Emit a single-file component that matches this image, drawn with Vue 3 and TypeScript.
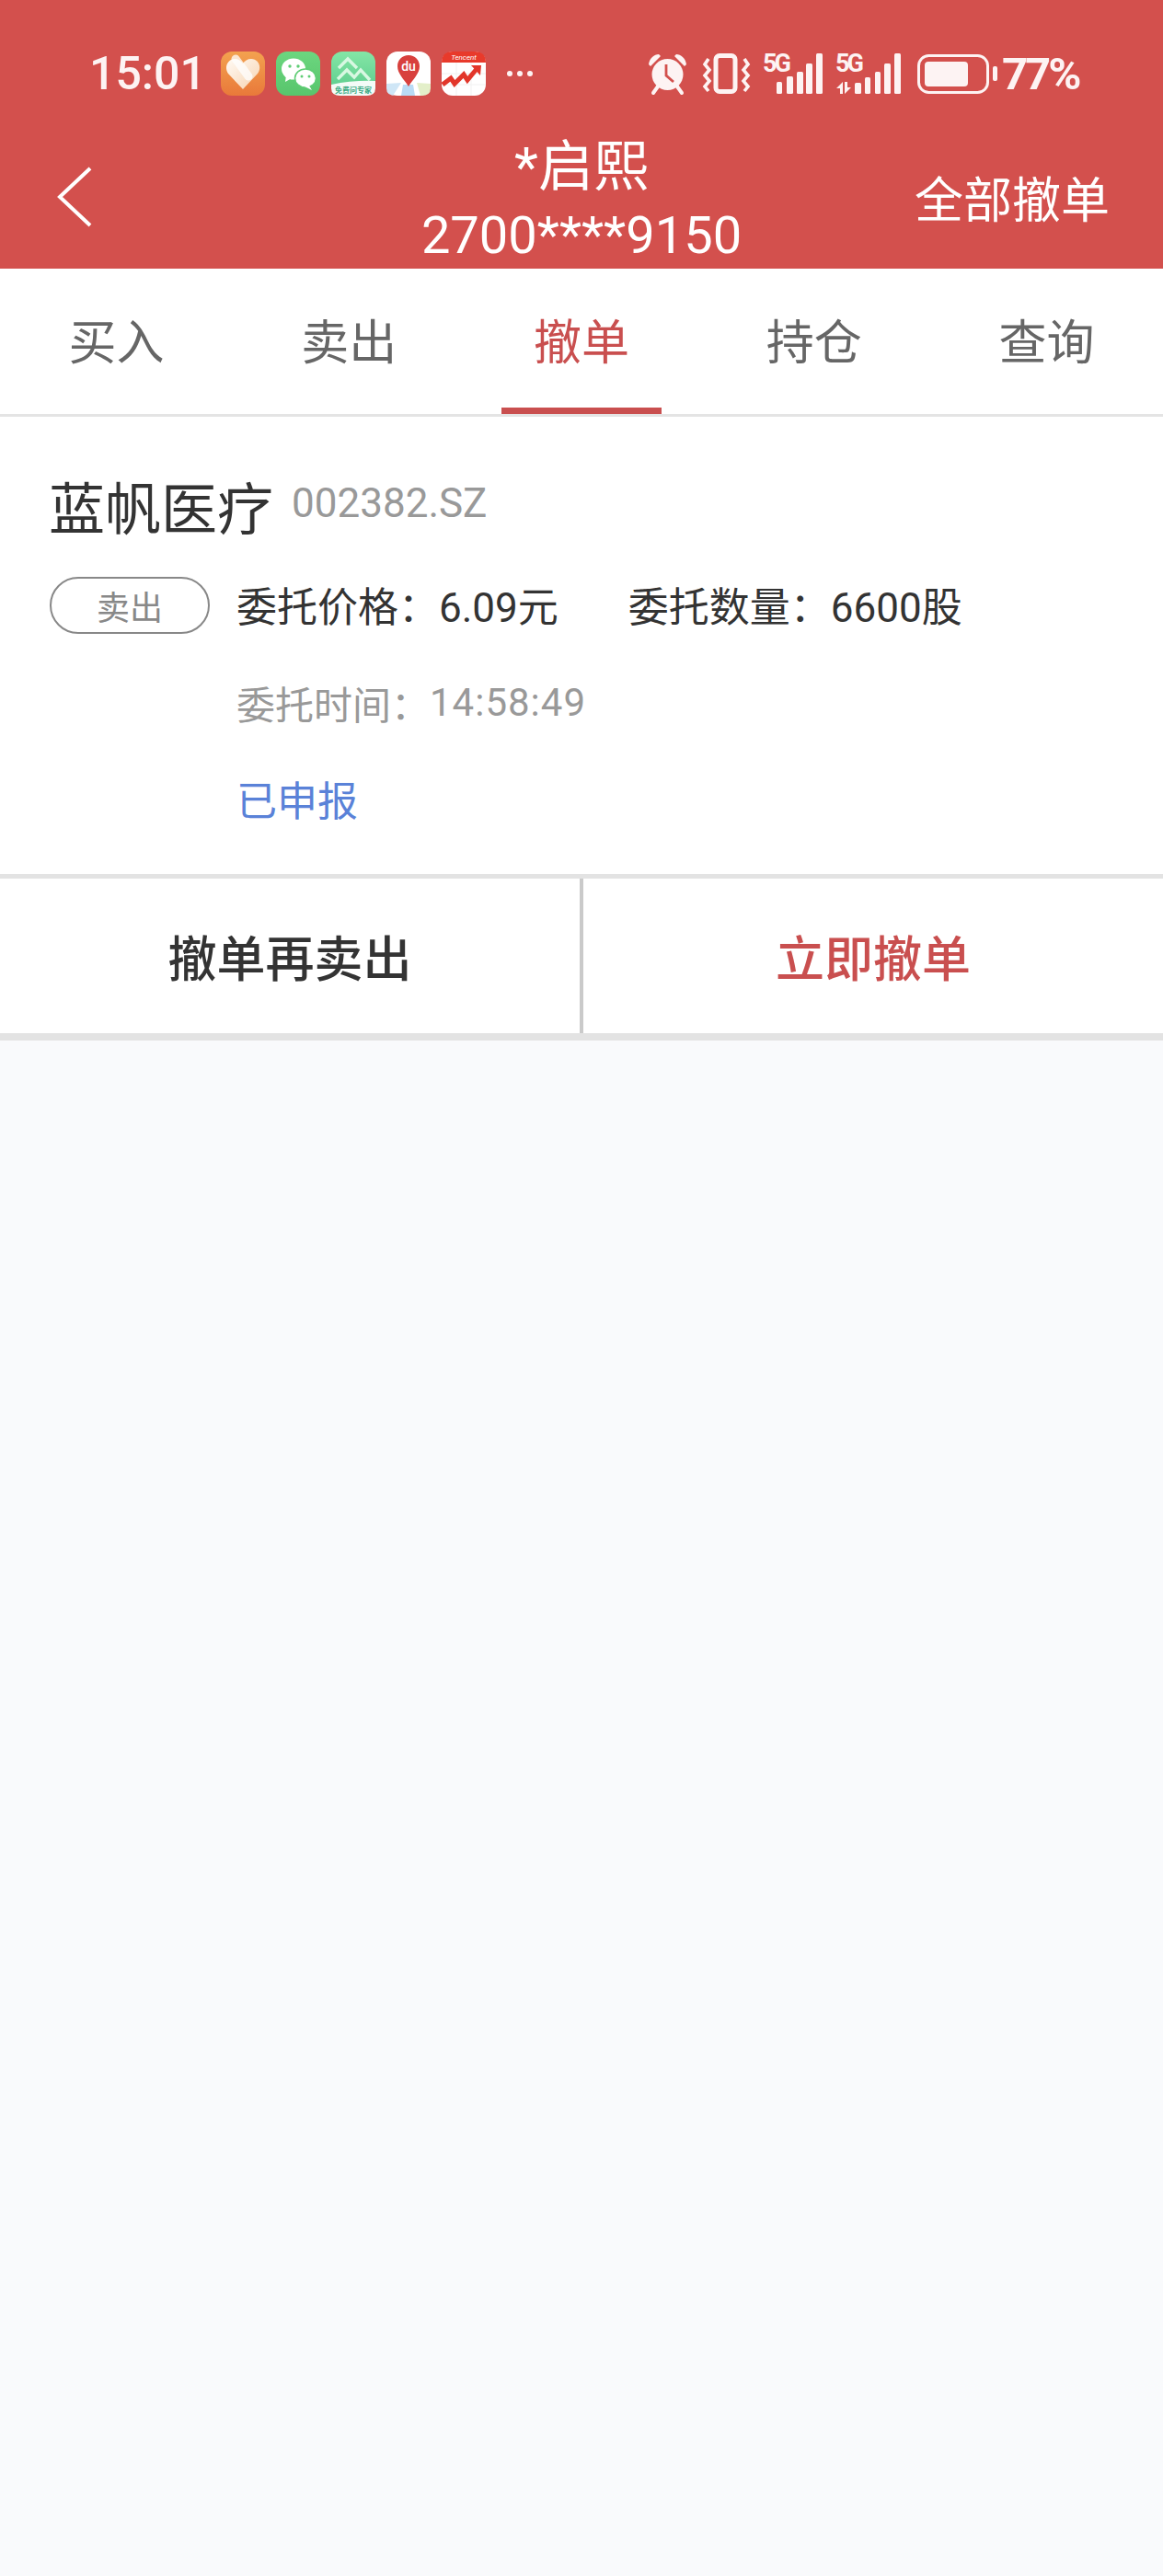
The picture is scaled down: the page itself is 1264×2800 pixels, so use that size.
<template>
  <div class="page">
    <header class="header">
      <div class="status">
        <span class="time">15:01</span>
        <div class="apps">
          <svg class="app" viewBox="0 0 48 48">
            <defs>
              <linearGradient id="orange" x1="0" y1="0" x2="0" y2="1"><stop offset="0" stop-color="#f3a24f" /><stop offset="1" stop-color="#e9793a" /></linearGradient>
              <linearGradient id="heart" x1="0" y1="0" x2="1" y2="1"><stop offset="0" stop-color="#fffaf4" /><stop offset="1" stop-color="#f7d3b0" /></linearGradient>
              <linearGradient id="wx" x1="0" y1="0" x2="0" y2="1"><stop offset="0" stop-color="#6cd67f" /><stop offset="1" stop-color="#58c56c" /></linearGradient>
              <linearGradient id="mint" x1="0" y1="0" x2="0" y2="1"><stop offset="0" stop-color="#84e6a6" /><stop offset="1" stop-color="#58c98a" /></linearGradient>
            </defs>
            <rect width="48" height="48" rx="12" fill="url(#orange)" />
            <path d="M24 41 L8 24 C3 17 8 8 15 8 C19 8 22 10 24 13 C26 10 29 8 33 8 C41 8 45 17 40 24 Z" fill="url(#heart)" />
            <path d="M16 8 L30 27" stroke="#fff" stroke-width="9" stroke-linecap="round" opacity=".75" />
          </svg>
          <svg class="app" viewBox="0 0 48 48">
            <rect width="48" height="48" rx="12" fill="url(#wx)" />
            <ellipse cx="19" cy="19" rx="13" ry="11.5" fill="#fff" />
            <path d="M11 26 L10 33 L17 29 Z" fill="#fff" />
            <ellipse cx="32" cy="29" rx="11.5" ry="10" fill="#fff" stroke="#5fcd75" stroke-width="1.5" />
            <path d="M36 37 L39 42 L31 38 Z" fill="#fff" />
            <circle cx="15" cy="16" r="1.7" fill="#5fcd75" /><circle cx="24" cy="16" r="1.7" fill="#5fcd75" />
            <circle cx="28" cy="27" r="1.5" fill="#5fcd75" /><circle cx="36" cy="27" r="1.5" fill="#5fcd75" />
          </svg>
          <svg class="app" viewBox="0 0 48 48">
            <rect width="48" height="48" rx="12" fill="url(#mint)" />
            <path d="M0 36 Q24 31 48 32 V40 Q48 48 38 48 H10 Q0 48 0 40 Z" fill="#f3fbf7" />
            <path d="M8 18 L18 8 L28 18 M7 30 L17 20 L25 28 L32 20 L42 31" fill="none" stroke="#d8f8e2" stroke-width="3.4" />
            <text x="24" y="45" text-anchor="middle" class="mini">免费问专家</text>
          </svg>
          <svg class="app" viewBox="0 0 48 48">
            <rect width="48" height="48" rx="12" fill="#fff" />
            <path d="M0 35 L16 34 L7 48 H10 Q0 48 0 40 Z" fill="#cfe6f6" />
            <path d="M18 36 H29 L31 48 H16 Z" fill="#b9dbf5" />
            <path d="M33 34 L48 35 V40 Q48 48 38 48 H37 Z" fill="#e3efc9" />
            <path d="M24 38 C19 30 12 24 12 16 C12 9 17 4 24 4 C31 4 36 9 36 16 C36 24 29 30 24 38 Z" fill="#d8403d" />
            <text x="24" y="21" text-anchor="middle" class="du">du</text>
          </svg>
          <svg class="app" viewBox="0 0 48 48">
            <rect width="48" height="48" rx="12" fill="#fff" />
            <path d="M0 12 Q0 0 12 0 H36 Q48 0 48 12 Z" fill="#e83a2b" />
            <text x="24" y="9" text-anchor="middle" class="tencent">Tencent</text>
            <path d="M0 24 H48 M0 36 H48 M16 12 V48 M32 12 V48" stroke="#f1f1f1" stroke-width="1" />
            <path d="M1 36 L10 29 L14 35 L24 25 L28 31 L38 19" fill="none" stroke="#e2362a" stroke-width="5" />
            <path d="M32 15 L43 15 L42 26 Z" fill="#e2362a" />
          </svg>
          <span class="more"><i></i><i></i><i></i></span>
        </div>
        <div class="sys">
          <svg class="alarm" viewBox="0 0 43 44">
            <path d="M1 12 C2 5 7 1 12 1 L14 3 L3 14 Z M42 12 C41 5 36 1 31 1 L29 3 L40 14 Z" fill="#fdf3f3" />
            <circle cx="21.5" cy="23" r="17" fill="#fdf3f3" />
            <path d="M6 43 L11 36 M37 43 L32 36" stroke="#fdf3f3" stroke-width="4" stroke-linecap="round" />
            <path d="M20 12 V24 L28 31" fill="none" stroke="#d3504d" stroke-width="2.8" />
          </svg>
          <svg class="vib" viewBox="0 0 53 44">
            <rect x="15" y="2.5" width="21" height="39" rx="4" fill="none" stroke="#fdf3f3" stroke-width="5" />
            <path d="M7 6 L3 12 L8 18 L3 24 L8 30 L3 36 L7 41 M46 6 L50 12 L45 18 L50 24 L45 30 L50 36 L46 41" fill="none" stroke="#fdf3f3" stroke-width="3.6" />
          </svg>
          <svg class="sig-a" viewBox="0 0 65 45">
            <text x="0" y="20" class="fiveg">5G</text>
            <rect x="15" y="31" width="6" height="13" rx="1.5" /><rect x="26" y="25" width="7" height="19" rx="1.5" /><rect x="37" y="20" width="7" height="24" rx="1.5" /><rect x="47" y="11" width="7" height="33" rx="1.5" /><rect x="58" y="0" width="7" height="44" rx="1.5" />
          </svg>
          <svg class="sig-b" viewBox="0 0 71 45">
            <text x="0" y="20" class="fiveg">5G</text>
            <path d="M8 31 V44 H5 V38 H1 Z M10 31 H13 V37 H17 L10 44 Z" />
            <rect x="21" y="32" width="7" height="12" rx="1.5" /><rect x="32" y="26" width="6" height="18" rx="1.5" /><rect x="43" y="20" width="6" height="24" rx="1.5" /><rect x="53" y="11" width="7" height="33" rx="1.5" /><rect x="64" y="0" width="7" height="44" rx="1.5" />
          </svg>
          <svg class="battery" viewBox="0 0 87 43">
            <rect x="1.5" y="1.5" width="75" height="40" rx="11" fill="none" stroke="#fdf3f3" stroke-width="3" />
            <rect x="8" y="8" width="47" height="27" rx="4" fill="#fdf3f3" />
            <rect x="82" y="13" width="5" height="16" rx="2" fill="#fdf3f3" />
          </svg>
          <span class="percent">77%</span>
        </div>
      </div>
      <div class="nav">
        <div class="nav-side">
          <svg class="back" viewBox="0 0 40 66">
            <path d="M37 2 L4 33 L37 64" fill="none" stroke="#fff" stroke-width="4" />
          </svg>
        </div>
        <div class="title">
          <div class="name">*启熙</div>
          <div class="account">2700****9150</div>
        </div>
        <div class="nav-side right">全部撤单</div>
      </div>
    </header>

    <nav class="tabs">
      <div
        v-for="tab in tabs"
        :key="tab"
        class="tab"
        :class="{ active: tab === current }"
      >
        <span class="tab-label">{{ tab }}</span>
      </div>
    </nav>

    <section class="order">
      <div class="stock">
        <span class="stock-name">蓝帆医疗</span>
        <span class="stock-code">002382.SZ</span>
      </div>
      <div class="order-body">
        <div class="side"><span class="pill">卖出</span></div>
        <div class="details">
          <div class="line">
            <span class="price">委托价格：<span class="num">6.09</span>元</span>
            <span>委托数量：<span class="num">6600</span>股</span>
          </div>
          <div class="line muted">委托时间：<span class="num">14:58:49</span></div>
          <div class="line state">已申报</div>
        </div>
      </div>
    </section>

    <div class="actions">
      <button class="action">撤单再卖出</button>
      <button class="action danger">立即撤单</button>
    </div>
  </div>
</template>

<script setup lang="ts">
const tabs: string[] = ['买入', '卖出', '撤单', '持仓', '查询']
const current = '撤单'
</script>

<style>
html,
body {
  margin: 0;
  background: #f9fafc;
}
</style>

<style scoped>
.page {
  min-height: 2800px;
  background: #f9fafc;
  font-family: "Noto Sans CJK SC", "Noto Sans", sans-serif;
  color: #333;
}

.header {
  background: #d3504d;
  color: #fdf3f3;
  padding-top: 18px;
}

.status {
  height: 124px;
  display: flex;
  align-items: center;
  padding-left: 97px;
}

.time {
  width: 143px;
  font: 500 50px "Roboto", sans-serif;
}

.apps {
  display: flex;
  align-items: center;
  gap: 12px;
  width: 464px;
}

.app {
  width: 48px;
  height: 48px;
  display: block;
}

.mini {
  font: 700 8px "Noto Sans CJK SC", sans-serif;
  fill: #3aa981;
}

.du {
  font: 500 14px "Roboto", sans-serif;
  fill: #fff;
}

.tencent {
  font: italic 400 8px "Roboto", sans-serif;
  fill: #fff;
}

.more {
  display: flex;
  gap: 5px;
  margin-left: 11px;
}

.more i {
  width: 6px;
  height: 6px;
  border-radius: 50%;
  background: #fdf3f3;
}

.sys {
  display: flex;
  align-items: center;
}

.sys svg {
  display: block;
  fill: #fdf3f3;
  overflow: visible;
}

.alarm {
  width: 43px;
  height: 44px;
  margin-right: 16px;
}

.vib {
  width: 53px;
  height: 44px;
  margin-right: 13px;
}

.sig-a {
  width: 65px;
  height: 45px;
  margin-right: 14px;
}

.sig-b {
  width: 71px;
  height: 45px;
  margin-right: 18px;
}

.fiveg {
  font: 700 27px "Roboto", sans-serif;
  letter-spacing: -3px;
}

.battery {
  width: 87px;
  height: 43px;
  margin-right: 5px;
}

.percent {
  font: 700 49px "Roboto", sans-serif;
  letter-spacing: -3px;
}

.nav {
  display: grid;
  grid-template-columns: 1fr auto 1fr;
  align-items: center;
  height: 150px;
}

.nav-side {
  padding-bottom: 6px;
}

.back {
  display: block;
  width: 40px;
  height: 66px;
  margin-left: 61px;
}

.right {
  justify-self: end;
  padding-right: 58px;
  font-size: 53px;
  font-weight: 400;
  color: #fff;
}

.title {
  text-align: center;
  color: #fff;
}

.name {
  font-family: "Roboto", "Noto Sans CJK SC", sans-serif;
  font-size: 60px;
  font-weight: 400;
  line-height: 75px;
  margin-top: 2px;
}

.account {
  font: 400 56px/71px "Roboto", sans-serif;
  margin-top: 2px;
}

.tabs {
  display: grid;
  grid-template-columns: repeat(5, 1fr);
  height: 161px;
  background: #fff;
  border-bottom: 3px solid #e4e4e4;
  box-sizing: border-box;
}

.tab {
  display: flex;
  justify-content: center;
  align-items: center;
  font-size: 52px;
  color: #666;
}

.tab-label {
  height: 158px;
  line-height: 154px;
  box-sizing: border-box;
}

.tab.active {
  color: #c94f4f;
}

.tab.active .tab-label {
  width: 174px;
  text-align: center;
  border-bottom: 7px solid #c94f4f;
}

.order {
  background: #fff;
  padding: 61px 0 0 54px;
  height: 497px;
  box-sizing: border-box;
}

.stock {
  display: flex;
  align-items: center;
  height: 70px;
}

.stock-name {
  font-size: 61px;
  color: #333;
  margin-left: -1px;
}

.stock-code {
  margin-left: 20px;
  font: 400 44px "Roboto", sans-serif;
  color: #999;
  margin-bottom: 4px;
}

.order-body {
  display: flex;
  margin-top: 43px;
}

.side {
  width: 203px;
  flex: none;
}

.pill {
  display: flex;
  justify-content: center;
  align-items: center;
  width: 174px;
  height: 62px;
  border: 2px solid #888;
  border-radius: 31px;
  box-sizing: border-box;
  font-size: 36px;
  color: #888;
}

.details {
  font-size: 44px;
  margin-top: -2px;
}

.line {
  display: flex;
  align-items: center;
  height: 62px;
  margin-bottom: 43px;
  white-space: pre;
}

.line:first-child {
  margin-top: 1px;
  margin-bottom: 44px;
}

.price {
  margin-right: 76px;
}

.num {
  font-family: "Roboto", sans-serif;
}

.muted {
  color: #999;
  font-size: 42px;
}

.muted .num {
  letter-spacing: 1px;
}

.state {
  color: #5a82d8;
}

.actions {
  display: flex;
  height: 168px;
  background: #fff;
  border-top: 5px solid #e3e3e3;
  border-bottom: 8px solid #e3e3e3;
  box-sizing: content-box;
}

.action {
  flex: 1;
  border: 0;
  background: #fff;
  padding: 0;
  font-family: inherit;
  font-size: 53px;
  font-weight: 500;
  color: #333;
}

.action + .action {
  border-left: 4px solid #cacaca;
}

.action.danger {
  color: #c94f4f;
}
</style>
